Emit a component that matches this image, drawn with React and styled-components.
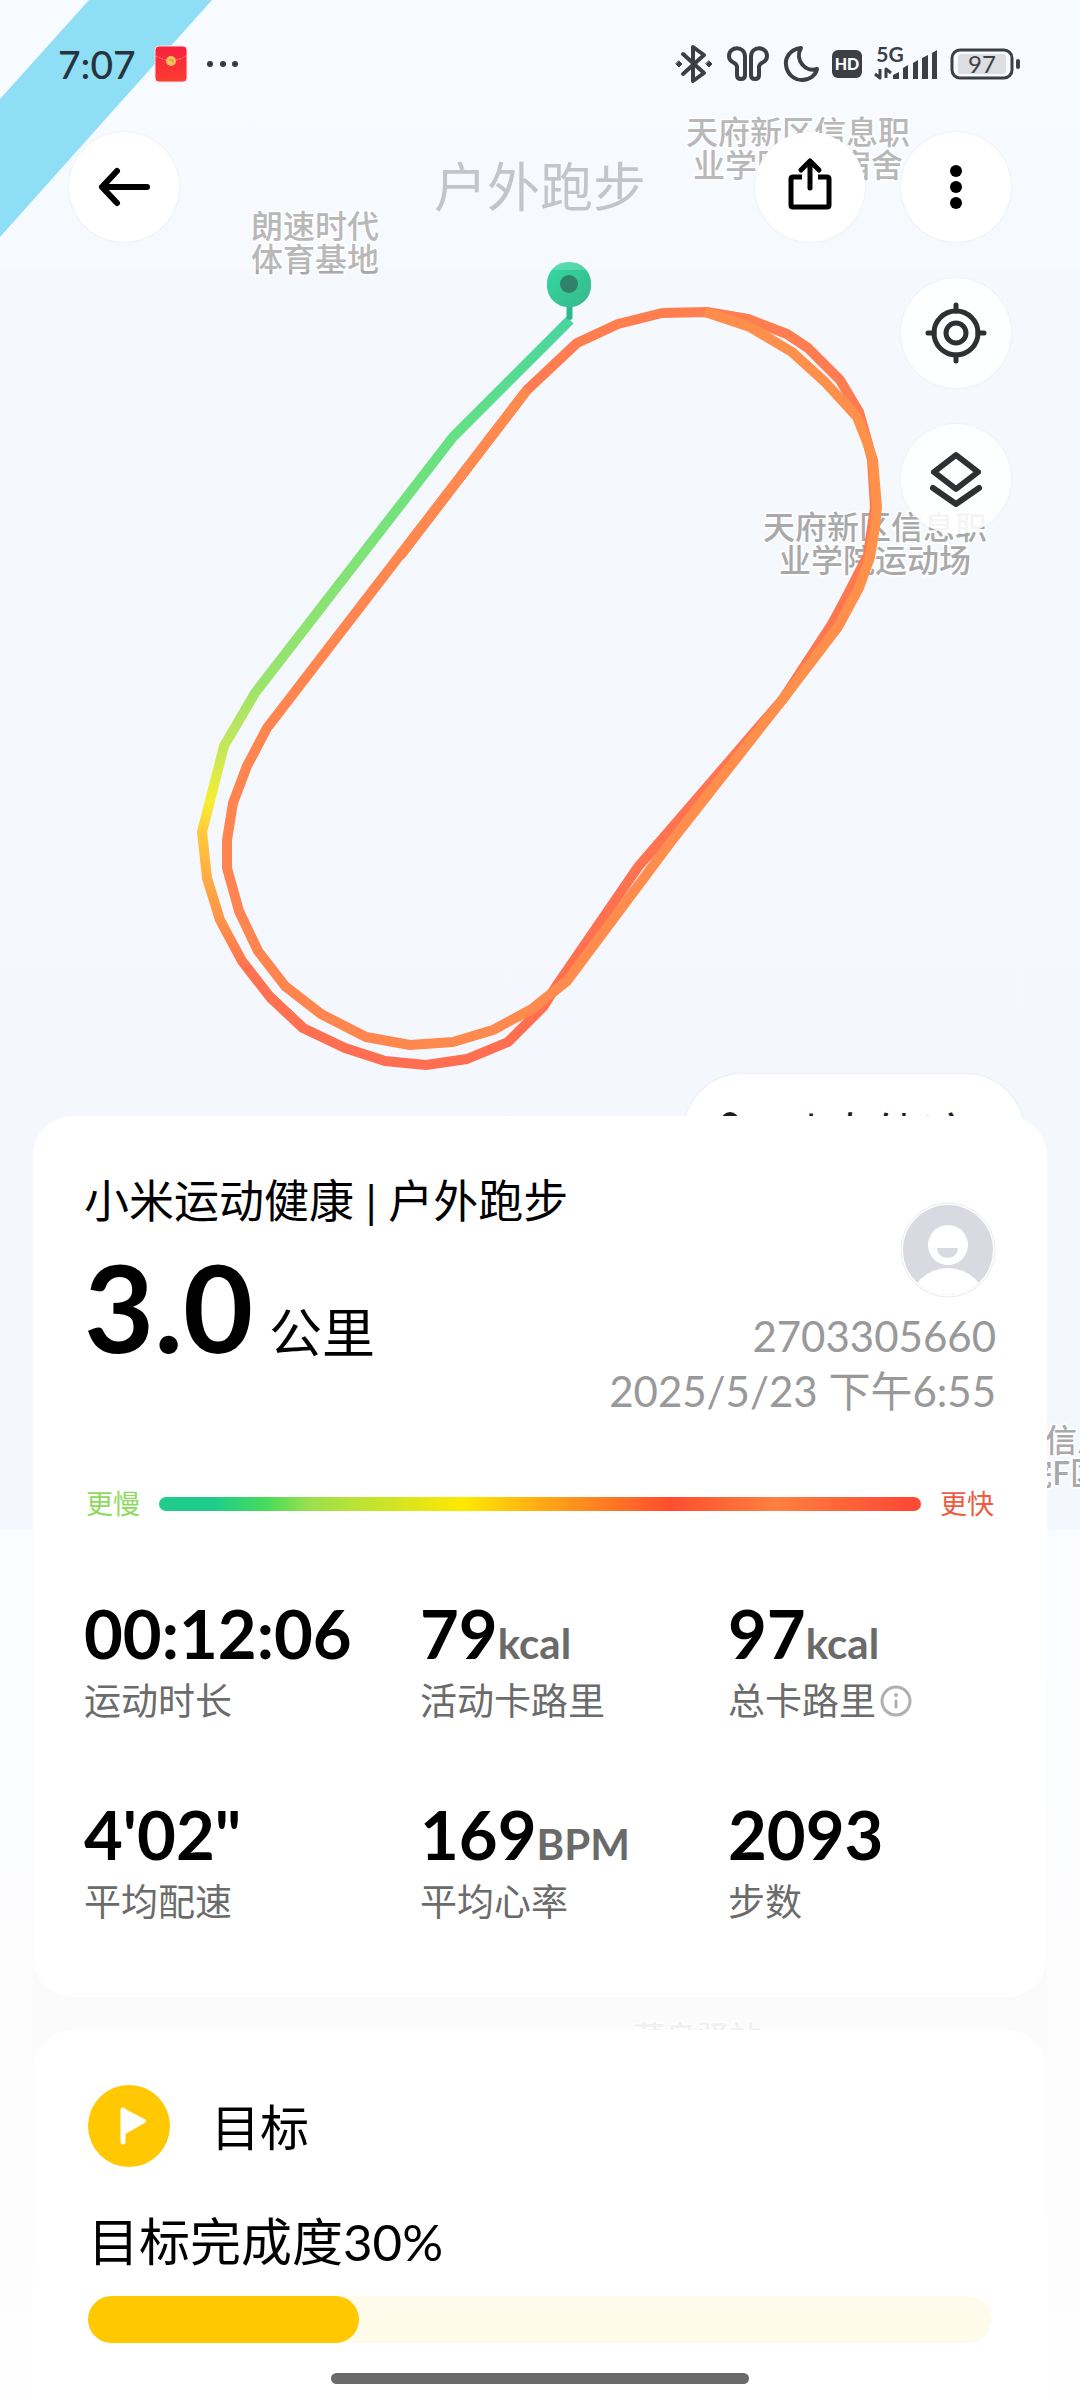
import styled, { createGlobalStyle } from "styled-components";

const latinFirst = `Lato, "Noto Sans CJK SC", sans-serif`;

const pace = { slow: "#8fd960", fast: "#ee5c42" };

const stats = [
    { label: "运动时长", value: "00:12:06" },
    { label: "活动卡路里", value: "79", unit: "kcal" },
    { label: "总卡路里", value: "97", unit: "kcal", info: true },
    { label: "平均配速", value: "4'02\"" },
    { label: "平均心率", value: "169", unit: "BPM" },
    { label: "步数", value: "2093" },
];

const places = [
    { x: 315, y: 238, lines: ["朗速时代", "体育基地"] },
    { x: 798, y: 144, lines: ["天府新区信息职", "业学院1号宿舍"] },
    { x: 875, y: 539, lines: ["天府新区信息职", "业学院运动场"] },
    { x: 1029, y: 1452, lines: ["天府新区信息职", "业学院F区"] },
    { x: 697, y: 2049, lines: ["菜鸟驿站"], faint: true },
];

//the run is cut in pieces so each one can have its own pace color
const firstCurve = "570,320 453,437 255,693 224,746 202,832 207,878 220,920 242,961 270,997 303,1028";
const firstLap = "270,997 303,1028 345,1048 385,1061 426,1065 467,1059 508,1042 543,1007 557,985 638,867 783,699 832,624 848,594 868,555 875,507 872,460 867,440 859,412 840,380 808,348 787,334 748,319 707,312 662,313 618,324 577,343 527,390 400,556";
const secondLap = "527,390 267,728 247,766 233,803 227,840 227,868 239,911 258,951 285,986 321,1014 366,1037 410,1045 453,1042 493,1030 532,1009 567,981 670,843 783,699 838,627 859,588 870,557 875,527 877,507 873,460 867,442 857,417 825,382 792,352 750,327 705,312";

export default function App(){

    const goal = 30;

    return(
    <>
        <GlobalStyle />
        <Page>
            <TrackMap />
            <TopArea>
                <StatusBar>
                    <StatusGroup>
                        <Clock>7:07</Clock>
                        <Envelope />
                        <Ellipsis />
                    </StatusGroup>
                    <StatusIcons />
                </StatusBar>
                <Header>
                    <RoundButton aria-label="返回"><BackIcon /></RoundButton>
                    <Title>户外跑步</Title>
                    <Actions>
                        <RoundButton aria-label="分享"><ShareIcon /></RoundButton>
                        <RoundButton aria-label="更多"><MoreIcon /></RoundButton>
                    </Actions>
                </Header>
            </TopArea>
            <MapWindow>
                <MapTools>
                    <RoundButton $overMap aria-label="定位"><TargetIcon /></RoundButton>
                    <RoundButton $overMap aria-label="图层"><LayersIcon /></RoundButton>
                </MapTools>
                <ReplayButton>
                    <ReplayIcon />
                    动态轨迹
                </ReplayButton>
            </MapWindow>
            <Card>
                <Summary>
                    <div>
                        <Source>小米运动健康 | 户外跑步</Source>
                        <Distance>3.0<span>公里</span></Distance>
                    </div>
                    <Runner>
                        <Avatar />
                        <p>2703305660</p>
                        <p>2025/5/23 下午6:55</p>
                    </Runner>
                </Summary>
                <PaceScale>
                    <PaceText $color={pace.slow}>更慢</PaceText>
                    <PaceBar />
                    <PaceText $color={pace.fast}>更快</PaceText>
                </PaceScale>
                <Stats>
                    {stats.map((stat) => (
                        <Stat key={stat.label}>
                            <StatLabel>{stat.label}{stat.info && <InfoIcon />}</StatLabel>
                            <StatValue>{stat.value}{stat.unit && <Unit>{stat.unit}</Unit>}</StatValue>
                        </Stat>
                    ))}
                </Stats>
            </Card>
            <GoalCard>
                <GoalHeading>
                    <FlagIcon />
                    <h2>目标</h2>
                </GoalHeading>
                <GoalText id="goal">目标完成度{goal}%</GoalText>
                <GoalTrack role="progressbar" aria-labelledby="goal" aria-valuenow={goal} aria-valuemin={0} aria-valuemax={100}>
                    <GoalFill style={{ width: `${goal}%` }} />
                </GoalTrack>
            </GoalCard>
            <HomeIndicator />
        </Page>
    </>
    );
}


function TrackMap(){
    return(
        <MapCanvas viewBox="0 0 1080 2400" preserveAspectRatio="xMidYMin slice" aria-hidden="true">
            <defs>
                <linearGradient id="ground" x1="0" y1="0" x2="0" y2="1">
                    <stop offset="0" stopColor="#f7faff" />
                    <stop offset="0.11" stopColor="#f5f9fe" />
                    <stop offset="0.637" stopColor="#f4f8fe" />
                    <stop offset="0.638" stopColor="#fafcff" />
                    <stop offset="0.82" stopColor="#fcfcfd" />
                    <stop offset="1" stopColor="#fefefe" />
                </linearGradient>
                <linearGradient id="startPace" gradientUnits="userSpaceOnUse" x1="0" y1="320" x2="0" y2="970">
                    <stop offset="0" stopColor="#4ad5a0" />
                    <stop offset="0.18" stopColor="#65e183" />
                    <stop offset="0.56" stopColor="#9be46c" />
                    <stop offset="0.66" stopColor="#c6e75a" />
                    <stop offset="0.74" stopColor="#f6ee32" />
                    <stop offset="0.79" stopColor="#ffc83c" />
                    <stop offset="0.92" stopColor="#ff9449" />
                    <stop offset="1" stopColor="#ff7150" />
                </linearGradient>
                <linearGradient id="firstPace" gradientUnits="userSpaceOnUse" x1="0" y1="1066" x2="0" y2="311">
                    <stop offset="0" stopColor="#ff6e50" />
                    <stop offset="1" stopColor="#ff7e50" />
                </linearGradient>
                <linearGradient id="secondPace" gradientUnits="userSpaceOnUse" x1="227" y1="0" x2="875" y2="0">
                    <stop offset="0" stopColor="#ff8450" />
                    <stop offset="1" stopColor="#ff914b" />
                </linearGradient>
                <linearGradient id="pin" x1="0" y1="0" x2="1" y2="1">
                    <stop offset="0" stopColor="#33d9a2" />
                    <stop offset="1" stopColor="#37b88c" />
                </linearGradient>
            </defs>
            <rect width="1080" height="2400" fill="url(#ground)" />
            <rect x="33" y="1960" width="1014" height="110" fill="#fbfbfb" />
            <path d="M89 0H212L0 237V99Z" fill="#76d8f4" />
            {places.map((place) => (
                <PlaceName key={place.y} $faint={place.faint}>
                    {place.lines.map((line, i) => (
                        <tspan key={line} x={place.x} y={place.y + i * 33}>{line}</tspan>
                    ))}
                </PlaceName>
            ))}
            <Track points={firstLap} stroke="url(#firstPace)" />
            <Track points={secondLap} stroke="url(#secondPace)" />
            <Track points={firstCurve} stroke="url(#startPace)" />
            <path d="M569.500 300V317" stroke="#2fb98c" strokeWidth="6" strokeLinecap="round" />
            <rect x="547" y="262" width="44" height="45" rx="21" fill="url(#pin)" />
            <circle cx="569" cy="284" r="9" fill="#30836a" />
        </MapCanvas>
    );
}

function StatusIcons(){
    return(
        <svg width="348" height="44" viewBox="674 42 348 44" fill="none" stroke="#3c4046" strokeLinecap="round" strokeLinejoin="round">
            <path d="M683 54L704 73L693 81V47L704 55L683 74" strokeWidth="4" />
            <path d="M679 61l3 3-3 3-3-3zM709 61l3 3-3 3-3-3z" fill="#3c4046" strokeWidth="1" />
            <path d="M745 76V57C745 45 729 46 729 56C729 64 737 61 737 67V75Q737 79 741 79Q745 79 745 75Z" strokeWidth="4" />
            <path d="M751 76V57C751 45 767 46 767 56C767 64 759 61 759 67V75Q759 79 755 79Q751 79 751 75Z" strokeWidth="4" />
            <path d="M801 48C790 49 785 58 786 65C787 74 794 80 802 80C810 80 816 75 817 69C806 73 794 60 801 48Z" strokeWidth="4" />
            <rect x="832" y="50" width="30" height="28" rx="6" fill="#3c4046" stroke="none" />
            <StatusGlyph x="847" y="70" fontSize="16" fontWeight="900" fill="#fff">HD</StatusGlyph>
            <StatusGlyph x="890" y="62" fontSize="21" fontWeight="700" fill="#3c4046">5G</StatusGlyph>
            <path d="M875 74L880 78V69M891 73L886 69V78" strokeWidth="3" strokeLinecap="butt" />
            <path d="M893 75L899 72V79H893ZM903 68L908 65V79H903ZM913 63L918 60V79H913ZM922 58L928 55V79H922ZM932 53L937 50V79H932Z" fill="#3c4046" stroke="none" />
            <rect x="952" y="50" width="60" height="28" rx="8" strokeWidth="3" />
            <rect x="958" y="54" width="48" height="20" rx="3" fill="#dcdee2" stroke="none" />
            <rect x="1016" y="59" width="4" height="10" rx="2" fill="#3c4046" stroke="none" />
            <StatusGlyph x="982" y="73" fontSize="24" fontWeight="400" fill="#3c4046">97</StatusGlyph>
        </svg>
    );
}

function Envelope(){
    return(
        <svg width="34" height="38" viewBox="0 0 34 38">
            <defs>
                <linearGradient id="packet" x1="0" y1="0" x2="0" y2="1">
                    <stop offset="0" stopColor="#f7203f" />
                    <stop offset="1" stopColor="#fc3d30" />
                </linearGradient>
            </defs>
            <rect x="1" y="1" width="32" height="36" rx="4" fill="url(#packet)" stroke="#f8dfe4" />
            <path d="M2 11Q17 20 32 11" fill="none" stroke="#ff8a8a" strokeDasharray="2 1" />
            <circle cx="17" cy="16" r="5" fill="#f4c35a" />
            <path d="M15 15h4v3" fill="none" stroke="#e08a34" />
        </svg>
    );
}

function Ellipsis(){
    return(
        <svg width="34" height="8" viewBox="0 0 34 8" fill="#343a40">
            <circle cx="4" cy="4" r="3" />
            <circle cx="17" cy="4" r="3" />
            <circle cx="29" cy="4" r="3" />
        </svg>
    );
}

function BackIcon(){
    return(
        <svg width="60" height="60" viewBox="0 0 60 60" fill="none" stroke="#000" strokeWidth="6" strokeLinecap="round" strokeLinejoin="round">
            <path d="M53 30H8M23 14L8 30L23 46" />
        </svg>
    );
}

function ShareIcon(){
    return(
        <svg width="60" height="60" viewBox="0 0 60 60" fill="none" stroke="#000" strokeWidth="5" strokeLinejoin="round">
            <path d="M22 20H13Q11 20 11 22V48Q11 50 13 50H47Q49 50 49 48V22Q49 20 47 20H38" />
            <path d="M30 31V6M21 13L30 4L39 13" strokeLinecap="round" />
        </svg>
    );
}

function MoreIcon(){
    return(
        <svg width="60" height="60" viewBox="0 0 60 60">
            <circle cx="30" cy="14" r="6" />
            <circle cx="30" cy="30" r="6" />
            <circle cx="30" cy="46" r="6" />
        </svg>
    );
}

function TargetIcon(){
    return(
        <svg width="64" height="64" viewBox="0 0 64 64" fill="none" stroke="#2f3032" strokeWidth="5">
            <circle cx="32" cy="32" r="22" />
            <circle cx="32" cy="32" r="10" />
            <path d="M32 10V4M32 54V60M10 32H4M54 32H60" strokeLinecap="round" />
        </svg>
    );
}

function LayersIcon(){
    return(
        <svg width="64" height="64" viewBox="0 0 64 64" fill="none" stroke="#2f3032" strokeWidth="6" strokeLinejoin="round">
            <path d="M32 8L54 25L32 42L10 25Z" />
            <path d="M9 41L32 57L55 41" strokeLinecap="round" />
        </svg>
    );
}

function ReplayIcon(){
    return(
        <svg width="44" height="44" viewBox="0 0 44 44" fill="none" stroke="#1c1c1c" strokeWidth="4">
            <circle cx="14" cy="11" r="7" />
            <path d="M14 18V26H32V38" />
        </svg>
    );
}

function Avatar(){
    return(
        <svg width="96" height="96" viewBox="0 0 96 96">
            <defs>
                <clipPath id="face"><circle cx="48" cy="48" r="45" /></clipPath>
            </defs>
            <circle cx="48" cy="48" r="47" fill="#fff" stroke="#ececef" />
            <g clipPath="url(#face)">
                <rect width="96" height="96" fill="#d8d9e1" />
                <circle cx="48" cy="43" r="20" fill="#fff" />
                <ellipse cx="48" cy="102" rx="38" ry="36" fill="#fff" />
                <path d="M37 46H58C58 59 37 59 37 46Z" fill="#d8d9e1" />
            </g>
        </svg>
    );
}

function InfoIcon(){
    return(
        <svg width="32" height="32" viewBox="0 0 32 32" fill="none" stroke="#b0b0b0">
            <circle cx="16" cy="16" r="14" strokeWidth="3" />
            <path d="M16 16V22" strokeWidth="3" strokeLinecap="round" />
            <circle cx="16" cy="10" r="2" fill="#b0b0b0" stroke="none" />
        </svg>
    );
}

function FlagIcon(){
    return(
        <svg width="83" height="83" viewBox="0 0 83 83" stroke="#fff" strokeLinecap="round" strokeLinejoin="round">
            <circle cx="41" cy="41" r="41" fill="#ffc800" stroke="none" />
            <path d="M35 25L56 36L35 48Z" fill="#fff" strokeWidth="4" />
            <path d="M35 25V57" strokeWidth="5" />
        </svg>
    );
}


const GlobalStyle = createGlobalStyle`
    *{
        box-sizing: border-box;
        margin: 0;
        padding: 0;
    }

    body{
        background-color: #fefefe;
        color: #000;
        font-family: ${latinFirst};
    }

    button{
        border: none;
        font-family: inherit;
        cursor: pointer;
    }

    svg{
        display: block;
        flex-shrink: 0;
    }
`

const Page = styled.main`
    position: relative;
    isolation: isolate;
    min-height: 100vh;
    overflow: hidden;
`

const MapCanvas = styled.svg`
    position: absolute;
    inset: 0;
    z-index: -1;
    width: 100%;
    height: 100%;
`

const PlaceName = styled.text`
    fill: ${({ $faint }) => $faint ? "#f1f1f1" : "#a9a9a9"};
    stroke: #fff;
    stroke-width: 3px;
    paint-order: stroke;
    text-anchor: middle;
    font-size: 32px;
    font-weight: 500;
    font-family: "Noto Sans CJK SC", sans-serif;
`

const Track = styled.polyline`
    fill: none;
    stroke-width: 10px;
    stroke-linejoin: round;
`

const TopArea = styled.div`
    background-color: rgba(255, 255, 255, 0.18);
`

const StatusBar = styled.div`
    display: flex;
    align-items: center;
    justify-content: space-between;
    height: 128px;
    padding: 0 58px;
`

const StatusGroup = styled.div`
    display: flex;
    align-items: center;
    gap: 18px;
`

const Clock = styled.span`
    color: #26343d;
    font-size: 39px;
    font-weight: 500;
    line-height: 48px;
`

const StatusGlyph = styled.text`
    stroke: none;
    text-anchor: middle;
    font-family: ${latinFirst};
`

const Header = styled.header`
    display: grid;
    grid-template-columns: 1fr auto 1fr;
    align-items: center;
    padding: 4px 69px 28px;
`

const Title = styled.h1`
    color: #c3c5c9;
    font-size: 53px;
    font-weight: 400;
    line-height: 64px;
`

const Actions = styled.div`
    display: flex;
    justify-content: flex-end;
    gap: 36px;
`

const RoundButton = styled.button`
    display: flex;
    align-items: center;
    justify-content: center;
    width: 110px;
    height: 110px;
    border-radius: 50%;
    background-color: ${({ $overMap }) => $overMap ? "rgba(255, 255, 255, 0.88)" : "#fff"};
    box-shadow: 0 0 2px rgba(60, 70, 90, 0.12);
`

const MapWindow = styled.section`
    display: flex;
    flex-direction: column;
    align-items: flex-end;
    justify-content: space-between;
    height: 846px;
    padding: 8px 56px 0;
`

const MapTools = styled.div`
    display: flex;
    flex-direction: column;
    gap: 36px;
    margin-right: 13px;
`

const ReplayButton = styled.button`
    display: flex;
    align-items: center;
    gap: 18px;
    height: 116px;
    margin-bottom: -74px;
    padding: 0 54px 0 32px;
    border-radius: 58px;
    background-color: #fff;
    box-shadow: 0 0 2px rgba(60, 70, 90, 0.16);
    color: #1c1c1c;
    font-size: 48px;
`

const Card = styled.section`
    position: relative;
    margin: 0 33px;
    padding: 56px 51px 73px;
    border-radius: 40px;
    background-color: #fff;
`

const Summary = styled.div`
    display: flex;
    justify-content: space-between;
`

const Source = styled.h2`
    font-size: 45px;
    font-weight: 400;
    line-height: 58px;
`

const Distance = styled.p`
    display: flex;
    align-items: baseline;
    gap: 16px;
    margin-top: 15px;
    font-size: 121px;
    font-weight: 700;
    line-height: 124px;

    span{
        font-size: 53px;
        font-weight: 400;
        line-height: 64px;
    }
`

const Runner = styled.div`
    display: flex;
    flex-direction: column;
    align-items: flex-end;
    padding-top: 30px;
    color: #999;
    font-size: 42px;
    line-height: 55px;

    svg{
        margin-bottom: 11px;
    }
`

const PaceScale = styled.div`
    display: flex;
    align-items: center;
    gap: 19px;
    margin-top: 67px;
    padding: 0 2px;
`

const PaceText = styled.span`
    color: ${({ $color }) => $color};
    font-size: 27px;
    line-height: 36px;
`

const PaceBar = styled.div`
    flex: 1;
    height: 14px;
    border-radius: 7px;
    background: linear-gradient(90deg, #1fcc8d 0%, #1fcc8d 7%, #48db5c 14%, #9de04c 20%, #ffe800 40%, #ffab15 50%, #ff4d2f 67%, #ff8040 81%, #ff4b36 98%);
`

const Stats = styled.dl`
    display: grid;
    grid-template-columns: 336fr 308fr 268fr;
    row-gap: 69px;
    margin-top: 69px;
`

const Stat = styled.div`
    display: flex;
    flex-direction: column-reverse;
    gap: 4px;
    min-width: 0;
`

const StatValue = styled.dd`
    font-size: 67px;
    font-weight: 700;
    line-height: 84px;
    white-space: nowrap;
`

const Unit = styled.span`
    color: #6a6a6a;
    font-size: 42px;
    line-height: 48px;
`

const StatLabel = styled.dt`
    display: flex;
    align-items: center;
    gap: 4px;
    color: #6b6b6b;
    font-size: 37px;
    line-height: 44px;
`

const GoalCard = styled(Card)`
    margin-top: 33px;
    padding: 55px 55px 57px;
    border-radius: 40px 40px 0 0;
`

const GoalHeading = styled.div`
    display: flex;
    align-items: center;
    gap: 40px;

    h2{
        font-size: 49px;
        font-weight: 400;
        line-height: 60px;
    }
`

const GoalText = styled.p`
    margin-top: 44px;
    font-size: 51px;
    line-height: 60px;
`

const GoalTrack = styled.div`
    height: 47px;
    margin-top: 24px;
    border-radius: 24px;
    background-color: #fffbeb;
`

const GoalFill = styled.div`
    height: 100%;
    border-radius: 24px;
    background-color: #ffc800;
`

const HomeIndicator = styled.div`
    position: fixed;
    bottom: 16px;
    left: 50%;
    width: 418px;
    height: 11px;
    border-radius: 6px;
    background-color: #6a6a6a;
    transform: translateX(-50%);
`
